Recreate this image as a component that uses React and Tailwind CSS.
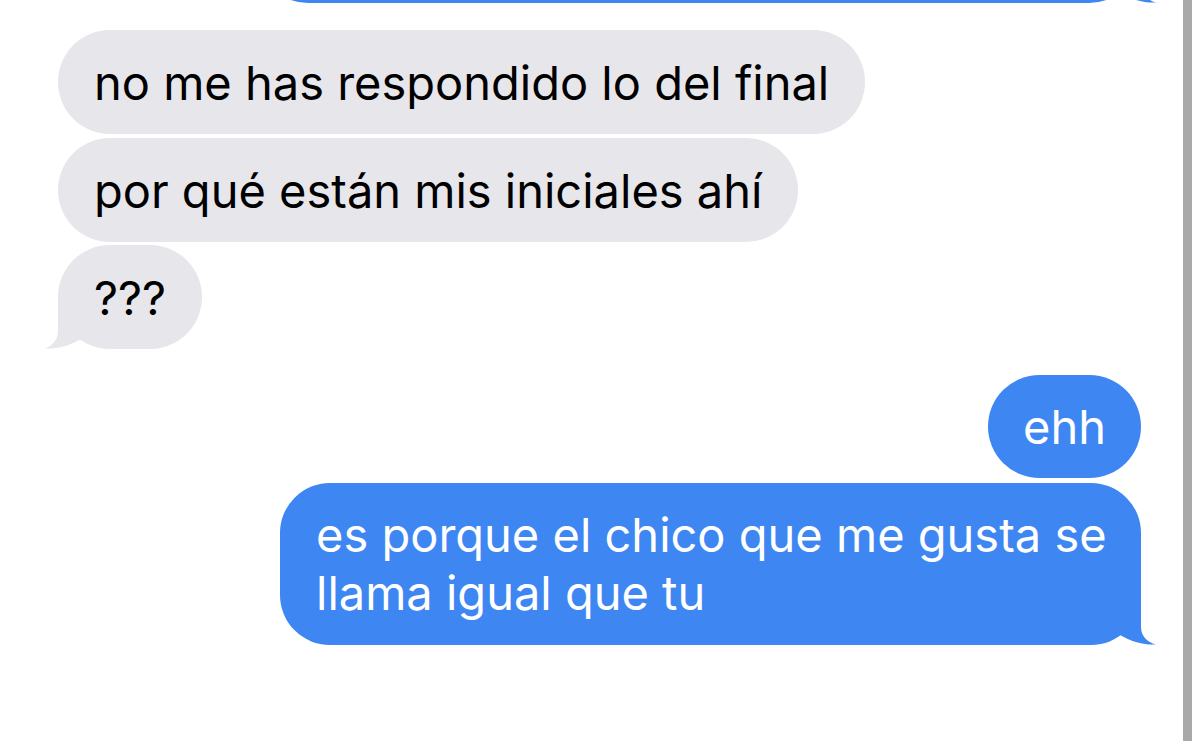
import React from 'react';

const font = { fontFamily: 'Inter, "Noto Sans", sans-serif' };

function GreyTail() {
    return (
        <svg className="absolute left-[-13px] bottom-0 w-[40px] h-[52px]" viewBox="0 0 40 52">
            <path d="M13,0 L13,34 C13,43 7,49 0,51.5 C12,52 24,49 36,42 L36,0 Z" fill="#e6e6eb" />
        </svg>
    );
}

function BlueTail() {
    return (
        <svg className="absolute right-[-15px] bottom-0 w-[40px] h-[52px]" viewBox="0 0 40 52">
            <path d="M25,0 L25,34 C25,43 31,49 40,51.5 C28,52 16,49 4,42 L4,0 Z" fill="#3e86f2" />
        </svg>
    );
}

function Received({ children, tail }) {
    return (
        <div className="flex justify-start pl-[58px]">
            <div className="relative h-[104px] flex items-center px-[36px] rounded-[52px] bg-[#e6e6eb] text-black text-[47px]">
                <span className="relative z-10 leading-none whitespace-nowrap">{children}</span>
                {tail && <GreyTail />}
            </div>
        </div>
    );
}

export default function App() {
    return (
        <div className="w-[1200px] h-[741px] bg-white flex overflow-hidden" style={font}>
            <div className="w-[1183px] flex flex-col">
                {/* previous sent message, cut off at the top */}
                <div className="flex justify-end pr-[42px]">
                    <div className="relative w-[885px] h-[104px] -mt-[101px] rounded-[52px] bg-[#3e86f2]">
                        <BlueTail />
                    </div>
                </div>

                <div className="mt-[27px]">
                    <Received>no me has respondido lo del final</Received>
                </div>
                <div className="mt-[4px]">
                    <Received>por qué están mis iniciales ahí</Received>
                </div>
                <div className="mt-[3px]">
                    <Received tail>???</Received>
                </div>

                <div className="mt-[26px] flex justify-end pr-[42px]">
                    <div className="h-[103px] flex items-center px-[35px] rounded-[52px] bg-[#3e86f2] text-white text-[47px]">
                        <span className="leading-none">ehh</span>
                    </div>
                </div>
                <div className="mt-[5px] flex justify-end pr-[42px]">
                    <div className="relative w-[861px] h-[162px] flex items-center px-[36px] rounded-[50px] bg-[#3e86f2] text-white text-[47px]">
                        <p className="relative z-10 leading-[58px] whitespace-nowrap">es porque el chico que me gusta se<br />llama igual que tu</p>
                        <BlueTail />
                    </div>
                </div>
            </div>
            <div className="w-[9px] bg-[#a9a9a9]" />
            <div className="flex-1 bg-white" />
        </div>
    );
}
